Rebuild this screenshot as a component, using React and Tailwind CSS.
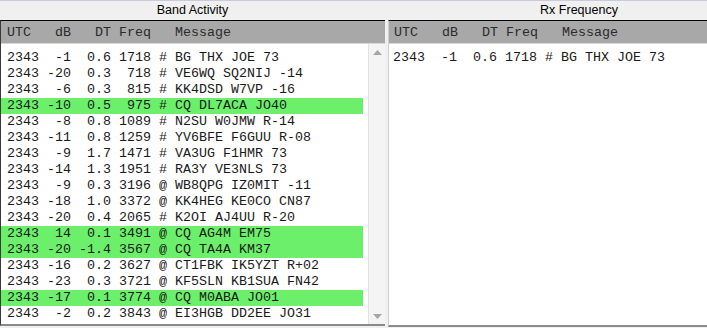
import React from 'react'

const rows = [
  [-1, '0.6', 1718, '#', 'BG THX JOE 73'],
  [-20, '0.3', 718, '#', 'VE6WQ SQ2NIJ -14'],
  [-6, '0.3', 815, '#', 'KK4DSD W7VP -16'],
  [-10, '0.5', 975, '#', 'CQ DL7ACA JO40', true],
  [-8, '0.8', 1089, '#', 'N2SU W0JMW R-14'],
  [-11, '0.8', 1259, '#', 'YV6BFE F6GUU R-08'],
  [-9, '1.7', 1471, '#', 'VA3UG F1HMR 73'],
  [-14, '1.3', 1951, '#', 'RA3Y VE3NLS 73'],
  [-9, '0.3', 3196, '@', 'WB8QPG IZ0MIT -11'],
  [-18, '1.0', 3372, '@', 'KK4HEG KE0CO CN87'],
  [-20, '0.4', 2065, '#', 'K2OI AJ4UU R-20'],
  [14, '0.1', 3491, '@', 'CQ AG4M EM75', true],
  [-20, '-1.4', 3567, '@', 'CQ TA4A KM37', true],
  [-16, '0.2', 3627, '@', 'CT1FBK IK5YZT R+02'],
  [-23, '0.3', 3721, '@', 'KF5SLN KB1SUA FN42'],
  [-17, '0.1', 3774, '@', 'CQ M0ABA JO01', true],
  [-2, '0.2', 3843, '@', 'EI3HGB DD2EE JO31'],
]

// fixed-width decode line: utc, dB, DT, freq, mode, message
const line = (r) =>
  '2343 ' +
  String(r[0]).padStart(3, ' ') + ' ' +
  r[1].padStart(4, ' ') + ' ' +
  String(r[2]).padStart(4, ' ') + ' ' +
  r[3] + ' ' + r[4]

const header = 'UTC   dB   DT Freq   Message'

const Row = ({ r }) => (
  <div className={`h-4 leading-4 pl-[6px] whitespace-pre ${r[5] ? 'bg-[#6cf06c]' : ''}`}>
    {line(r)}
  </div>
)

const Title = ({ children }) => (
  <div className="h-[19px] flex items-center justify-center text-[12.5px] text-black font-['Liberation_Sans',Arial,sans-serif]">
    {children}
  </div>
)

const HeaderRow = ({ pad }) => (
  <div className={`h-[23px] pt-[2px] bg-[#a8a8a8] border-b border-[#d8d8d8] flex items-center whitespace-pre text-[#2a2a2a] ${pad}`}>
    {header}
  </div>
)

const Arrow = ({ up }) => (
  <svg width="9" height="5" viewBox="0 0 9 5">
    <path d={up ? 'M0 5 L4.5 0 L9 5 Z' : 'M0 0 L4.5 5 L9 0 Z'} fill="#a6a6a6" />
  </svg>
)

export default function App() {
  return (
    <div className="w-[707px] h-[328px] overflow-hidden bg-[#f0f0f0] border-t border-[#cbc9df] flex font-['Liberation_Mono','Courier_New',monospace] text-[13.333px] text-[#1a1a1a]">
      <div className="w-[385px] shrink-0 flex flex-col">
        <Title>Band Activity</Title>
        <div className="flex-1 flex flex-col border-t border-black border-l border-l-[#3a3a3a] border-b-2 border-b-[#8a8a8a] mb-[2px]">
          <HeaderRow pad="pl-[6px]" />
          <div className="flex-1 flex min-h-0">
            <div className="flex-1 bg-white pt-[6px] pr-[5px] overflow-hidden">
              {rows.map((r, i) => (
                <Row key={i} r={r} />
              ))}
            </div>
            <div className="w-[17px] bg-[#f4f4f4] border-l border-[#e2e2e2] flex flex-col items-center justify-between pt-[6px] pb-[5px]">
              <Arrow up />
              <Arrow />
            </div>
          </div>
        </div>
      </div>
      <div className="w-[382px] shrink-0 ml-[3px] flex flex-col">
        <Title>Rx Frequency</Title>
        <div className="flex-1 flex flex-col border-t border-black border-l border-l-[#d0d0d0] border-b-2 border-b-[#8a8a8a] mb-px">
          <HeaderRow pad="pl-[5px]" />
          <div className="flex-1 bg-white pt-[6px]">
            <div className="h-4 leading-4 pl-[4px] whitespace-pre">{line(rows[0])}</div>
          </div>
        </div>
      </div>
    </div>
  )
}
